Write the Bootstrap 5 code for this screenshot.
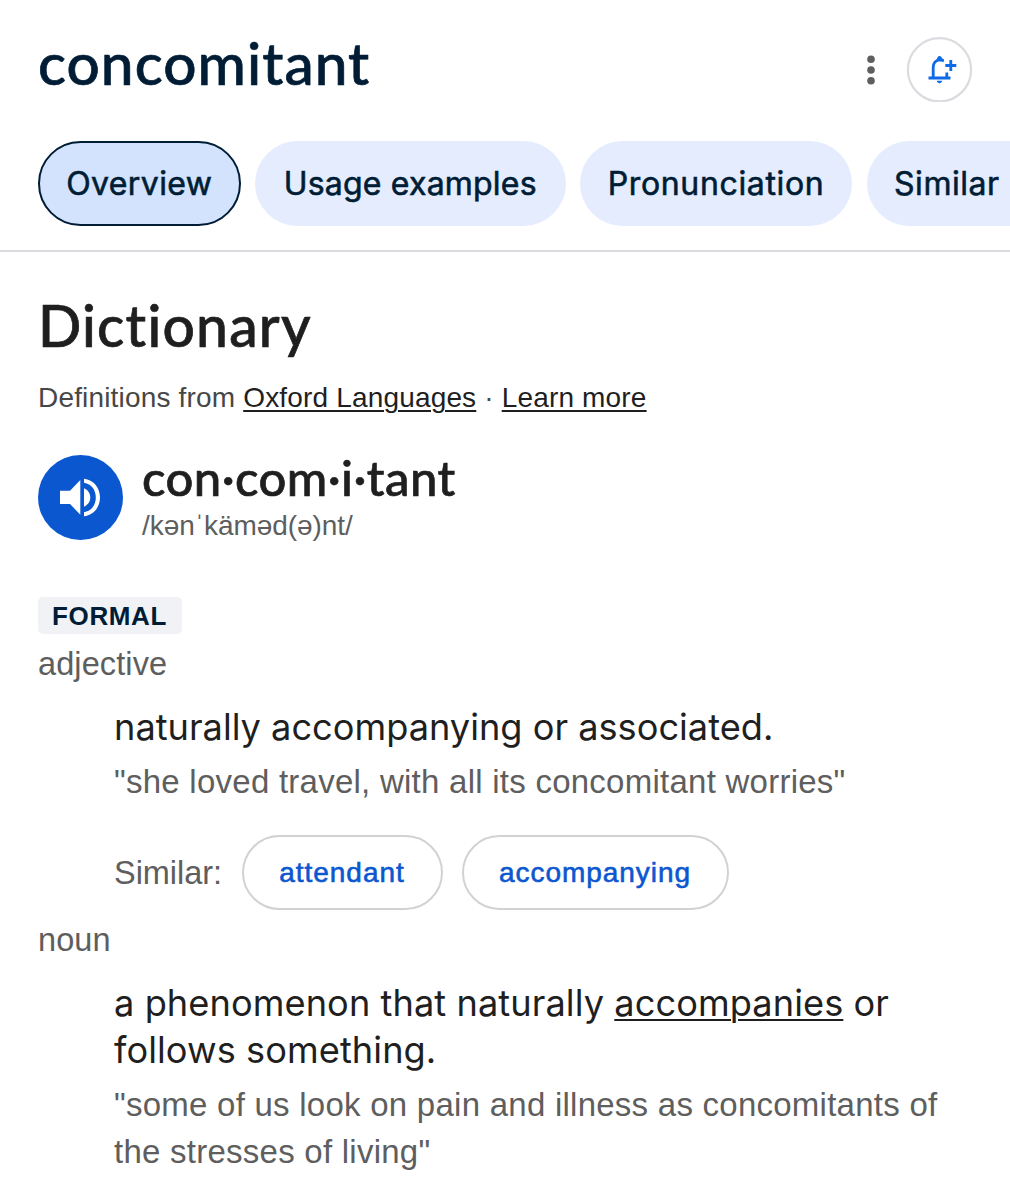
<!DOCTYPE html>
<html lang="en">
<head>
<meta charset="utf-8">
<meta name="viewport" content="width=device-width, initial-scale=1">
<title>concomitant</title>
<link href="https://cdn.jsdelivr.net/npm/bootstrap@5.3.0/dist/css/bootstrap.min.css" rel="stylesheet">
<style>
body{font-family:"Liberation Sans",Arial,sans-serif;color:#1f1f1f;background:#fff;overflow:hidden}
.page{width:1010px;height:1200px;overflow:hidden}
.topbar{padding:37px 38px 0 38px;height:141px}
.brand-face{font-family:Lato,"Open Sans",sans-serif;font-weight:500;font-variant-ligatures:none;-webkit-text-stroke:.7px currentColor;white-space:nowrap}
.word{font-size:58.5px;line-height:50px;letter-spacing:1.05px;color:#001d35}
.bell{width:65px;height:65px;margin-left:31px}
.tabs{gap:14.5px;padding-left:38px;padding-bottom:24.5px;border-bottom:2px solid #d9dbdf;overflow:hidden}
.tab{flex:none;height:84.5px;border-radius:43px;background:#e5ecfe;color:#001d35;font:400 32px/86px Inter,sans-serif;-webkit-text-stroke:.6px currentColor;letter-spacing:.2px;text-align:center;white-space:nowrap}
.tab-on{background:#d3e3fd;border:2.4px solid #001d35;line-height:81.5px;width:202.5px;letter-spacing:.4px}
.w-usage{width:310.5px}.w-pron{width:272px;letter-spacing:.65px}.w-sim{width:300px;text-align:left;padding-left:27.5px;letter-spacing:.55px}
.content-area{padding:41px 38px 0}
.section-title{font-size:57px;line-height:64px;letter-spacing:1.2px}
.source{margin-top:23px;font-size:28px;line-height:36px;letter-spacing:.17px;color:#474747;white-space:nowrap}
.source a{color:#1f1f1f;text-decoration-thickness:2px;text-underline-offset:3px}
.audio{margin-top:36px;gap:19px;height:93px}
.audio svg{margin-top:3px;flex:none}
.syll{font-size:49px;line-height:50px;letter-spacing:.45px}
.ipa{font-size:28px;line-height:36px;margin-top:6px;letter-spacing:-.06px;color:#5e5e5e;white-space:nowrap}
.register{margin-top:52px;width:144px;height:37px;border-radius:5px;background:#f0f2f5;color:#001d35;font-weight:700;font-size:26px;line-height:38px;letter-spacing:.6px;text-align:center;text-indent:-1px}
.pos,.quote,.sim-label{font-size:33px;color:#5e5e5e;letter-spacing:.25px;white-space:nowrap}
.pos,.sim-label{font-size:32.5px;letter-spacing:.1px}
.sim-label{letter-spacing:-.05px;padding-top:2px}
.pos{line-height:44px;margin-top:8px}
.sense{padding-left:76px}
.def{margin-top:18px;font:400 36.2px/47px Inter,sans-serif;white-space:nowrap}
.def.wide{letter-spacing:.07px}
.def a{color:inherit;text-decoration-thickness:2.4px;text-underline-offset:3px}
.quote{margin-top:7px;line-height:47px}
.similar{margin-top:30px;height:75px}
.chip{height:75px;border:2px solid #d2d2d2;border-radius:38px;color:#0b57d0;font-size:28px;line-height:71px;letter-spacing:.95px;-webkit-text-stroke:.6px currentColor;text-align:center}
</style>
</head>
<body>
<div class="page">
<header>
  <div class="topbar d-flex align-items-start">
    <h1 class="word brand-face mb-0 me-auto">concomitant</h1>
    <svg width="10" height="65" viewBox="0 0 10 65" fill="#5e5e5e"><circle cx="5" cy="22.300" r="3.800"/><circle cx="5" cy="33" r="3.800"/><circle cx="5" cy="43.700" r="3.800"/></svg>
    <svg class="bell" viewBox="0 0 65 65" fill="none" stroke="#0f6ae6" stroke-width="2.8">
      <circle cx="32.5" cy="32.800" r="31.600" stroke="#dadce0" stroke-width="2.200"/>
      <path d="M21.500 41H43.500M26.200 41V30.500C26.200 26 29 23 33 22.800L36.700 23.500M39.800 35.500V41M43.800 23V34M38.300 28.500H49.300"/>
      <path d="M29.300 23.500C30 20.800 31 19 32.500 19s2.500 1.500 3 3l2 2.600zM29.800 43.800h5.400c-.3 1.600-1.400 2.400-2.700 2.400s-2.400-.8-2.700-2.400z" fill="#0f6ae6" stroke="none"/>
    </svg>
  </div>
  <nav class="tabs d-flex">
    <div class="tab tab-on">Overview</div>
    <div class="tab w-usage">Usage examples</div>
    <div class="tab w-pron">Pronunciation</div>
    <div class="tab w-sim">Similar</div>
  </nav>
</header>
<main class="content-area">
  <h2 class="section-title brand-face mb-0">Dictionary</h2>
  <div class="source">Definitions from <a href="#">Oxford Languages</a> · <a href="#">Learn more</a></div>
  <div class="audio d-flex align-items-start">
    <svg width="85" height="85" viewBox="0 0 85 85"><circle cx="42.500" cy="42.500" r="42.500" fill="#0b57d0"/>
      <path fill="#fff" d="M22 35.700H32L42.300 25V59.700L32 49H22zM46 33.300C50 35 52.300 38.500 52.300 42.500S50 50 46 51.700zM46 23.700C55.500 24.800 62 32.500 62 42.500S55.500 60.200 46 61.300V57.200C53.500 56 57.800 50 57.800 42.500S53.500 29 46 27.800z"/></svg>
    <div>
      <div class="syll brand-face">con·com·i·tant</div>
      <div class="ipa">/kənˈkäməd(ə)nt/</div>
    </div>
  </div>
  <div class="register">FORMAL</div>
  <div class="pos">adjective</div>
  <div class="sense">
    <div class="def">naturally accompanying or associated.</div>
    <div class="quote">"she loved travel, with all its concomitant worries"</div>
    <div class="similar d-flex align-items-center">
      <span class="sim-label" style="width:127.500px">Similar:</span>
      <span class="chip" style="width:201px;margin-right:19px">attendant</span>
      <span class="chip" style="width:267px">accompanying</span>
    </div>
  </div>
  <div class="pos">noun</div>
  <div class="sense">
    <div class="def wide">a phenomenon that naturally <a href="#">accompanies</a> or<br>follows something.</div>
    <div class="quote">"some of us look on pain and illness as concomitants of<br>the stresses of living"</div>
  </div>
</main>
</div>
<script src="https://cdn.jsdelivr.net/npm/bootstrap@5.3.0/dist/js/bootstrap.bundle.min.js"></script>
</body>
</html>
